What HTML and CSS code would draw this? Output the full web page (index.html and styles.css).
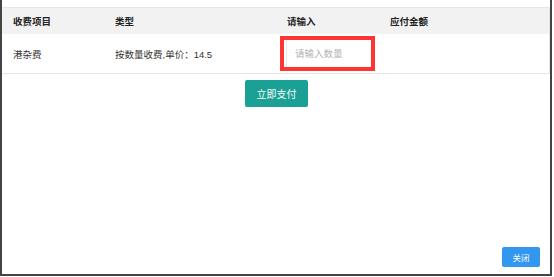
FILE: index.html
```html
<!DOCTYPE html>
<html lang="zh">
<head>
<meta charset="utf-8">
<link rel="stylesheet" href="styles.css">
</head>
<body>
<div class="dialog">
  <table class="grid">
    <colgroup>
      <col class="c1"><col class="c2"><col class="c3"><col class="c4">
    </colgroup>
    <thead>
      <tr><th>收费项目</th><th>类型</th><th>请输入</th><th>应付金额</th></tr>
    </thead>
    <tbody>
      <tr>
        <td>港杂费</td>
        <td>按数量收费,单价：14.5</td>
        <td class="input-cell"><div class="highlight"><input class="qty" type="text" placeholder="请输入数量"></div></td>
        <td></td>
      </tr>
    </tbody>
  </table>
  <div class="actions"><button class="pay">立即支付</button></div>
  <div class="footer"><button class="close">关闭</button></div>
</div>
</body>
</html>
```
FILE: styles.css
```css
html, body {
  margin: 0;
  padding: 0;
  background: #fff;
}
body {
  font-family: "Liberation Sans", "Noto Sans CJK SC", sans-serif;
  font-size: 9.5px;
  color: #333;
}
.dialog {
  box-sizing: border-box;
  width: 552px;
  height: 276px;
  border: 2px solid #444;
  border-top: none;
  box-shadow: 0 1px 0 #aaa;
  padding-top: 7px;
  display: flex;
  flex-direction: column;
}
.grid {
  width: 548px;
  border-collapse: collapse;
  table-layout: fixed;
  border-top: 1px solid #e6e6e6;
  border-right: 1px solid #e6e6e6;
  border-bottom: 1px solid #e6e6e6;
}
.c1 { width: 102px; }
.c2 { width: 172px; }
.c3 { width: 103px; }
.c4 { width: auto; }
.grid th {
  background: #f2f2f2;
  height: 26px;
  padding: 0 0 0 11px;
  text-align: left;
  font-weight: bold;
  color: #222;
}
.grid td {
  height: 39px;
  padding: 0 0 0 11px;
  color: #333;
}
.grid td.input-cell {
  padding: 0 0 0 4px;
}
.highlight {
  box-sizing: border-box;
  width: 95px;
  height: 35px;
  border: 4px solid #ff3535;
  padding-left: 2px;
  display: flex;
}
.qty {
  box-sizing: border-box;
  width: 100%;
  height: 27px;
  border: none;
  border-left: 1px solid #e6e6e6;
  padding: 0 0 0 8px;
  margin: 0;
  outline: none;
  font-family: "Liberation Sans", "Noto Sans CJK SC", sans-serif;
  font-size: 9.5px;
  color: #333;
  background: #fff;
}
.qty::placeholder { color: #b5b5b5; }
.actions {
  display: flex;
  justify-content: center;
  padding-top: 6px;
}
.pay {
  width: 63px;
  height: 27px;
  border: none;
  border-radius: 2px;
  background: #1aa094;
  color: #fff;
  font-family: "Liberation Sans", "Noto Sans CJK SC", sans-serif;
  font-size: 10px;
  padding: 0;
  margin-left: 1px;
}
.footer {
  margin-top: auto;
  display: flex;
  justify-content: flex-end;
  padding: 0 10px 7px 0;
}
.close {
  width: 38px;
  height: 20px;
  border: none;
  border-radius: 2px;
  background: #3396ef;
  color: #fff;
  font-family: "Liberation Sans", "Noto Sans CJK SC", sans-serif;
  font-size: 8.5px;
  padding: 0;
}
```
